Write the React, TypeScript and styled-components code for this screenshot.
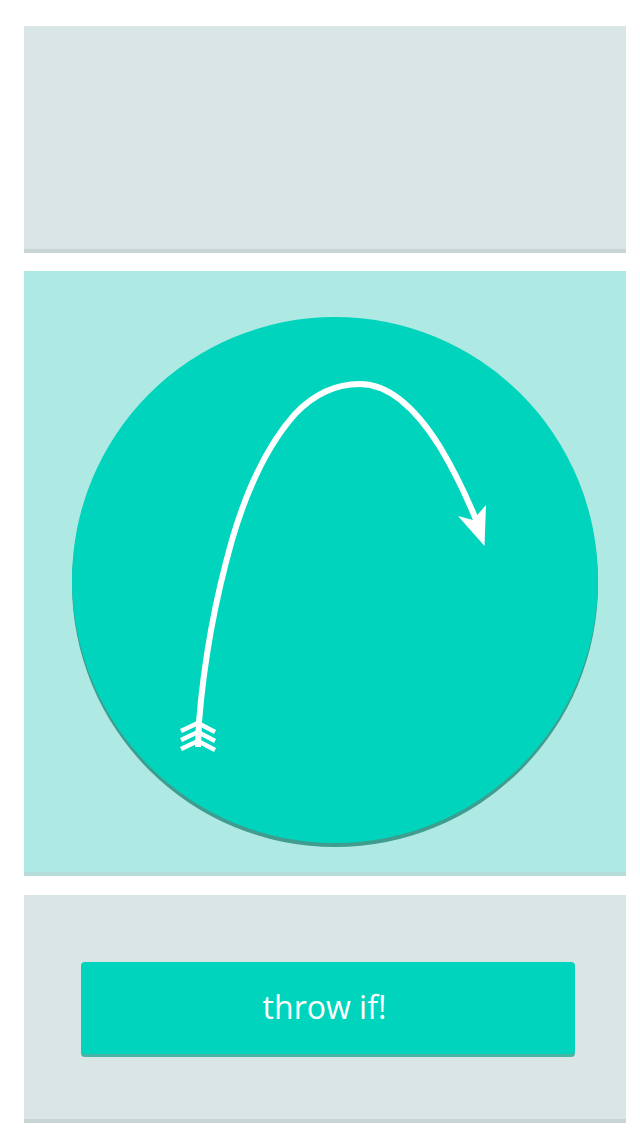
import React from "react";
import styled, { createGlobalStyle } from "styled-components";

const GlobalStyle = createGlobalStyle`
  html, body {
    margin: 0;
    background: #ffffff;
  }
`;

const Page = styled.div`
  width: 640px;
  height: 1136px;
  box-sizing: border-box;
  padding: 26px 14px 0 24px;
  display: flex;
  flex-direction: column;
  gap: 18px;
  overflow: hidden;
`;

const Panel = styled.section<{ $height: number }>`
  height: ${(p) => p.$height}px;
  box-sizing: border-box;
  background: #dae6e5;
  border-bottom: 4px solid #c8d5d4;
`;

const TargetPanel = styled.section`
  height: 605px;
  box-sizing: border-box;
  padding: 46px 0 0 48px;
  background: #aee9e3;
  border-bottom: 4px solid #b5dcd8;
`;

const Circle = styled.div`
  width: 526px;
  height: 526px;
  border-radius: 50%;
  background: #00d4bc;
  box-shadow: 0 4px 0 #3f9c8e;
`;

const ArrowArt = styled.svg`
  display: block;
  width: 100%;
  height: 100%;
  overflow: visible;
`;

const ActionPanel = styled(Panel)`
  margin-top: 1px;
  padding: 67px 50px 0 57px;
`;

const ThrowButton = styled.button`
  display: block;
  width: 494px;
  height: 92px;
  padding: 0 7px 3px 0;
  border: 0;
  border-radius: 4px;
  background: #00d4bc;
  box-shadow: 0 3px 0 #46b5a5;
  color: #ffffff;
  font-family: "Open Sans", sans-serif;
  font-size: 32px;
  font-weight: 400;
`;

export default function App() {
  return (
    <Page>
      <GlobalStyle />
      <Panel $height={227} />
      <TargetPanel>
        <Circle>
          <ArrowArt viewBox="72 317 526 526" fill="none" stroke="#ffffff">
            <path
              d="M198 747 L199 722 C204 660 215 600 232 540 C249 482 271 441 295 414 C316 392 338 384 360 384 C392 384 420 415 440 447 C455 472 466 495 477 522"
              strokeWidth="6"
            />
            <path
              d="M484.5 546 L458 516 L473 520 L486 505 Z"
              fill="#ffffff"
              stroke="none"
            />
            <path
              d="M181 731 L198 723 L215 732 M181 740 L198 732 L215 741 M181 749 L198 741 L215 750"
              strokeWidth="4.5"
            />
          </ArrowArt>
        </Circle>
      </TargetPanel>
      <ActionPanel $height={228}>
        <ThrowButton>throw if!</ThrowButton>
      </ActionPanel>
    </Page>
  );
}
